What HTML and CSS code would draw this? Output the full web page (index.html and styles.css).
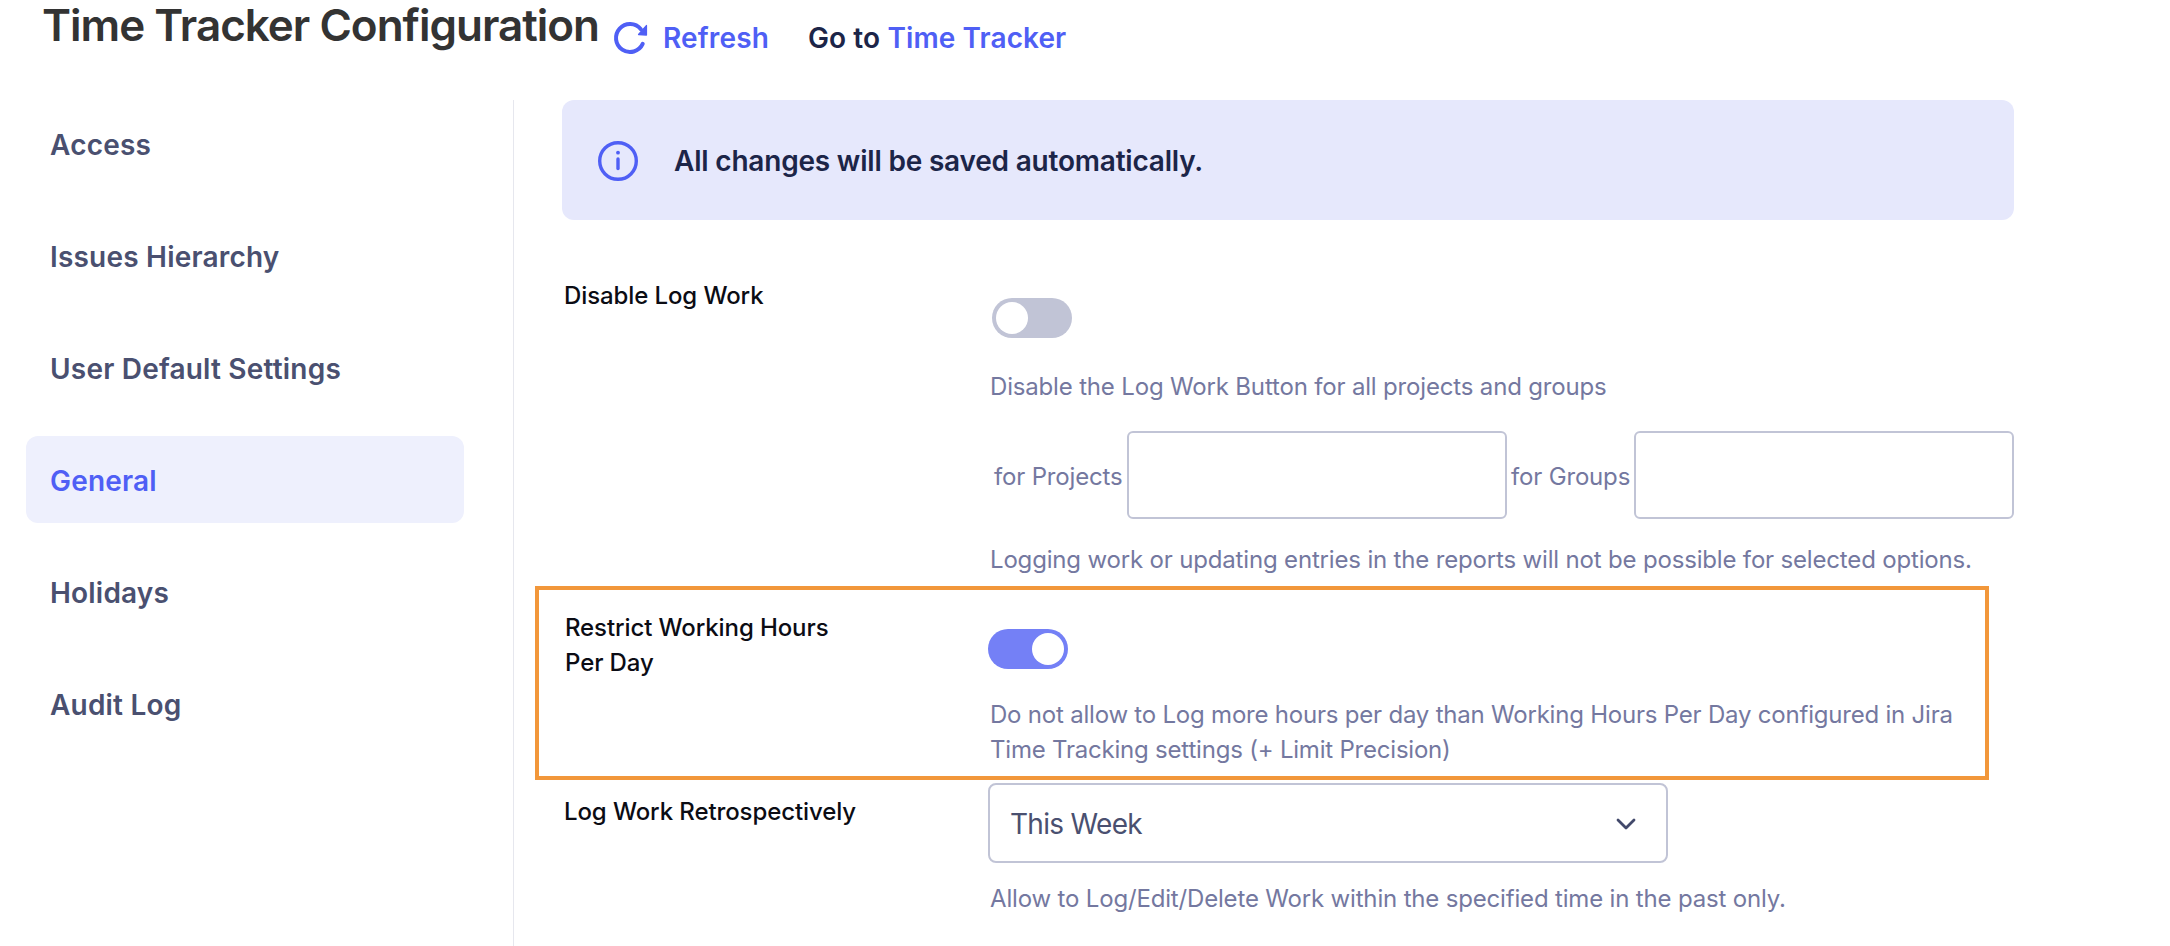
FILE: index.html
```html
<!DOCTYPE html>
<html lang="en">
<head>
	<title>Time Tracker Configuration</title>
	<meta charset="UTF-8" />
	<link rel="stylesheet" href="styles.css">
</head>
<body>
	<header class="pageHeader">
		<h1 class="pageTitle">Time Tracker Configuration</h1>
		<a class="refreshLink">
			<svg class="refreshIcon" viewBox="0 0 36 36">
				<path d="M29.7 23.9A14 14 0 1 1 27.9 9.2" fill="none" stroke="#4f5ff5" stroke-width="4" stroke-linecap="round"/>
				<path d="M33.4 5.6V15L25.6 14.5Z" fill="#4f5ff5" stroke="#4f5ff5" stroke-width="1.4" stroke-linejoin="round"/>
			</svg>
			Refresh
		</a>
		<span class="gotoLink">Go to <a>Time Tracker</a></span>
	</header>
	<div class="pageBody">
		<nav class="sideNav">
			<a class="navItem">Access</a>
			<a class="navItem">Issues Hierarchy</a>
			<a class="navItem">User Default Settings</a>
			<a class="navItem navItemActive">General</a>
			<a class="navItem">Holidays</a>
			<a class="navItem">Audit Log</a>
		</nav>
		<main class="content">
			<div class="banner">
				<svg class="bannerIcon" viewBox="0 0 40 40" fill="none" stroke="#4f5ff5" stroke-width="3.4" stroke-linecap="round">
					<circle cx="20" cy="20" r="18.3"/>
					<path d="M20 18V27.6"/>
					<circle cx="20" cy="11.7" r="1.9" fill="#4f5ff5" stroke="none"/>
				</svg>
				All changes will be saved automatically.
			</div>
			<section class="formRow">
				<div class="rowLabel">Disable Log Work</div>
				<div class="rowValue">
					<div class="toggle"></div>
					<p class="hint hintFirst">Disable the Log Work Button for all projects and groups</p>
					<div class="scopeFields">
						<label class="scopeLabel scopeLabelProjects">for Projects</label>
						<div class="textField textFieldProjects"></div>
						<label class="scopeLabel scopeLabelGroups">for Groups</label>
						<div class="textField textFieldGroups"></div>
					</div>
					<p class="hint hintAfterFields">Logging work or updating entries in the reports will not be possible for selected options.</p>
				</div>
			</section>
			<section class="formRow formRowHighlighted">
				<div class="rowLabel">Restrict Working Hours<br />Per Day</div>
				<div class="rowValue">
					<div class="toggle toggleOn"></div>
					<p class="hint hintFirst">Do not allow to Log more hours per day than Working Hours Per Day configured in Jira<br />Time Tracking settings (+ Limit Precision)</p>
				</div>
			</section>
			<section class="formRow formRowSelect">
				<div class="rowLabel">Log Work Retrospectively</div>
				<div class="rowValue">
					<div class="selectBox">
						This Week
						<svg class="selectArrow" viewBox="0 0 24 24" fill="none" stroke="#42496b" stroke-width="2.8" stroke-linecap="round" stroke-linejoin="round">
							<path d="M4 8l8 8 8-8"/>
						</svg>
					</div>
					<p class="hint hintAfterSelect">Allow to Log/Edit/Delete Work within the specified time in the past only.</p>
				</div>
			</section>
		</main>
	</div>
</body>
</html>
```

FILE: styles.css
```css
html, body {
	margin: 0px;
	padding: 0px;
	height: 946px;
	overflow: hidden;
	background: #FFFFFF;
	font-family: Inter, "Liberation Sans", sans-serif;
}
.pageHeader {
	display: flex;
	height: 100px;
	padding-left: 42px;
	box-sizing: border-box;
}
.pageTitle {
	margin: 0px;
	font-size: 44px;
	line-height: 50px;
	font-weight: 600;
	letter-spacing: -1px;
	color: #333333;
}
.refreshLink {
	display: flex;
	align-items: center;
	height: 36px;
	margin: 20px 0px 0px 14px;
	font-size: 28px;
	font-weight: 600;
	letter-spacing: 0.15px;
	color: #4F5FF5;
}
.refreshIcon {
	width: 36px;
	height: 36px;
	margin-right: 14px;
}
.gotoLink {
	height: 36px;
	margin: 20px 0px 0px 39px;
	font-size: 28px;
	line-height: 36px;
	font-weight: 600;
	letter-spacing: 0.1px;
	color: #1C2548;
}
.gotoLink a {
	color: #4F5FF5;
}
.pageBody {
	display: flex;
	height: 846px;
}
.sideNav {
	display: flex;
	flex-direction: column;
	width: 514px;
	padding: 0px 49px 0px 26px;
	box-sizing: border-box;
	border-right: 1px solid #E6E7EE;
}
.navItem {
	display: flex;
	align-items: center;
	height: 87px;
	margin-bottom: 25px;
	padding: 2px 0px 0px 24px;
	box-sizing: border-box;
	border-radius: 12px;
	font-size: 28px;
	font-weight: 600;
	letter-spacing: 0.2px;
	color: #4A5070;
}
.navItemActive {
	background: #EEF0FD;
	color: #4F5FF5;
}
.content {
	flex: none;
	width: 1452px;
	margin-left: 48px;
}
.banner {
	display: flex;
	align-items: center;
	height: 120px;
	padding: 2px 0px 0px 36px;
	box-sizing: border-box;
	border-radius: 12px;
	background: #E6E8FC;
	font-size: 28px;
	font-weight: 600;
	letter-spacing: -0.2px;
	color: #1C2548;
}
.bannerIcon {
	width: 40px;
	height: 40px;
	margin-right: 36px;
}
.formRow {
	display: flex;
	font-size: 24px;
	line-height: 35px;
}
.rowLabel {
	width: 426px;
	flex: none;
	padding-left: 2px;
	padding-top: 58px;
	font-weight: 500;
	letter-spacing: -0.1px;
	color: #0B0C14;
}
.rowValue {
	flex: 1;
	min-width: 0px;
}
.toggle {
	width: 80px;
	height: 40px;
	margin: 78px 0px 0px 2px;
	box-sizing: border-box;
	padding: 4px;
	border-radius: 20px;
	background: #C1C4D6;
}
.toggle::before {
	content: "";
	display: block;
	width: 32px;
	height: 32px;
	border-radius: 50%;
	background: #FFFFFF;
}
.toggleOn {
	display: flex;
	justify-content: flex-end;
	background: #7480F6;
}
.hint {
	margin: 0px;
	letter-spacing: -0.17px;
	white-space: nowrap;
	color: #7478A0;
}
.hintFirst {
	margin-top: 31px;
}
.scopeFields {
	display: flex;
	align-items: center;
	margin-top: 27px;
}
.scopeLabel {
	flex: none;
	padding-top: 2px;
	letter-spacing: -0.17px;
	white-space: nowrap;
	color: #7478A0;
}
.scopeLabelProjects {
	width: 133px;
	margin-left: 4px;
}
.scopeLabelGroups {
	width: 123px;
	margin-left: 4px;
}
.textField {
	flex: none;
	height: 88px;
	box-sizing: border-box;
	border: 2px solid #C1C4D6;
	border-radius: 6px;
}
.textFieldProjects {
	width: 380px;
}
.textFieldGroups {
	width: 380px;
}
.hintAfterFields {
	margin-top: 23px;
}
.formRowHighlighted {
	height: 194px;
	margin: 9px 25px 0px -27px;
	box-sizing: border-box;
	border: 4px solid #F2973A;
}
.formRowHighlighted .rowLabel {
	width: 425px;
	padding-left: 26px;
	padding-top: 20px;
}
.formRowHighlighted .toggle {
	margin: 39px 0px 0px -2px;
}
.formRowHighlighted .hint {
	margin-top: 28px;
	letter-spacing: -0.21px;
}
.formRowSelect .rowLabel {
	padding-top: 14px;
}
.selectBox {
	display: flex;
	align-items: center;
	justify-content: space-between;
	width: 680px;
	height: 80px;
	margin: 3px 0px 0px -2px;
	box-sizing: border-box;
	padding: 2px 28px 0px 20px;
	border: 2px solid #C1C4D6;
	border-radius: 8px;
	font-size: 28px;
	letter-spacing: -0.7px;
	color: #4A5070;
}
.selectArrow {
	width: 24px;
	height: 24px;
}
.hintAfterSelect {
	margin-top: 18px;
}
```
